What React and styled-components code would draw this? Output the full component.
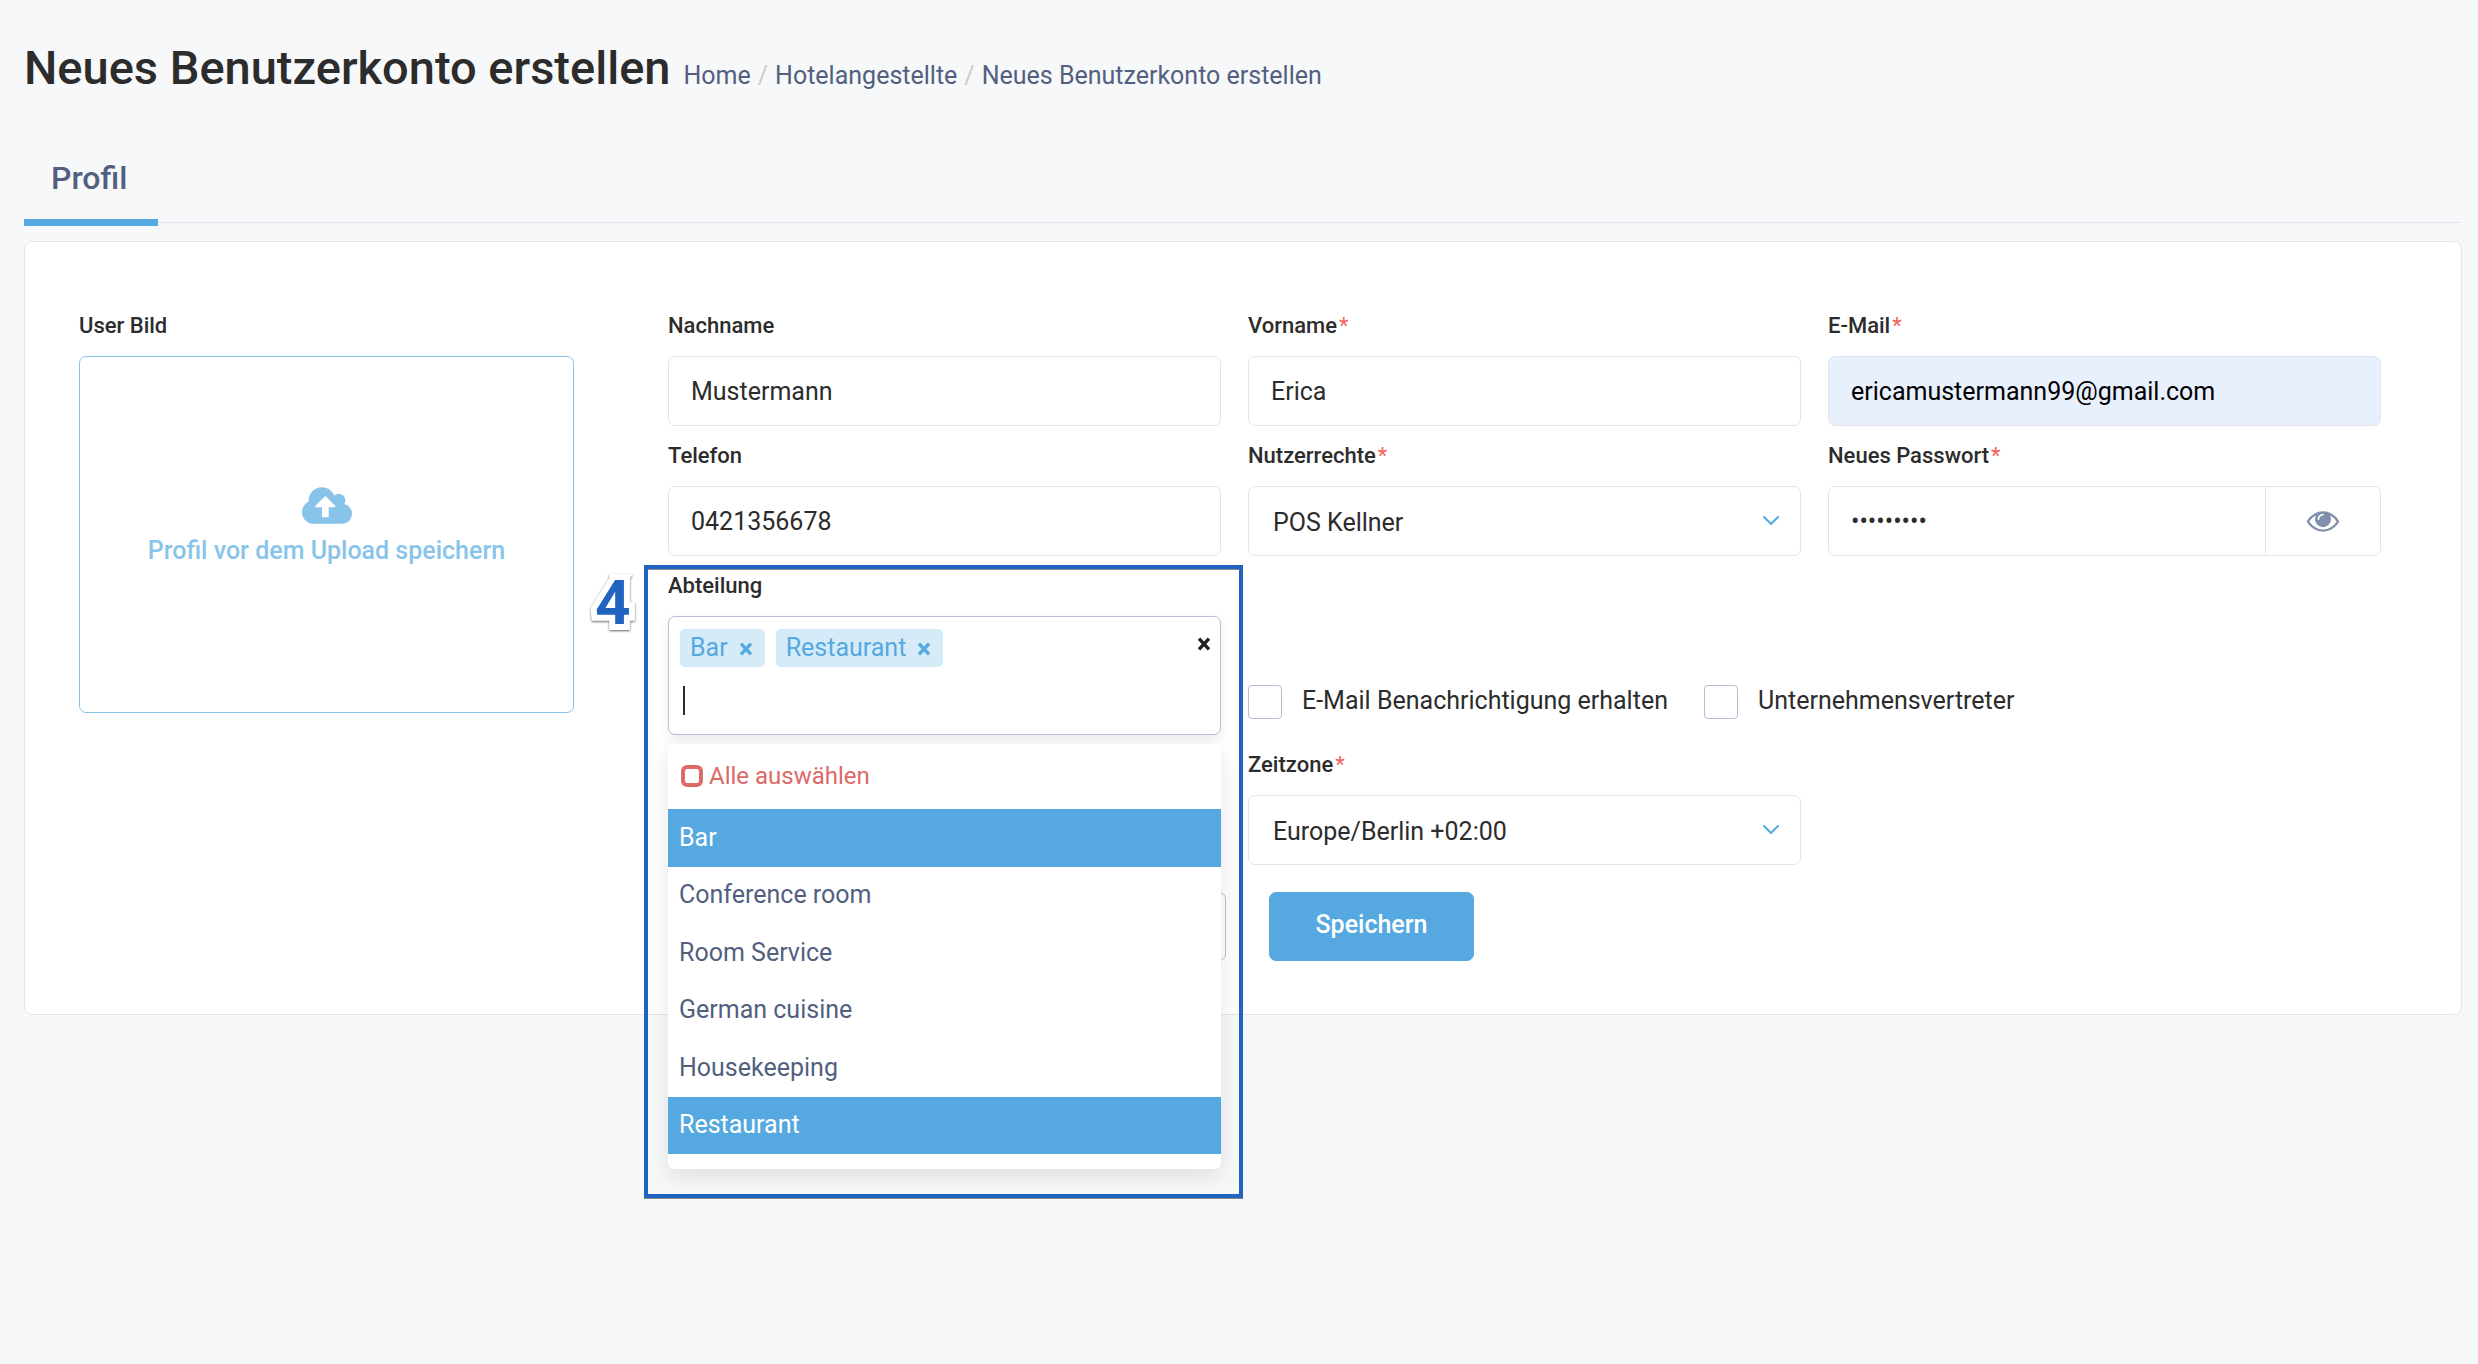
import React from "react";
import styled, { createGlobalStyle } from "styled-components";

const GlobalStyle = createGlobalStyle`
  *, *::before, *::after { box-sizing: border-box; }
  body {
    margin: 0;
    min-height: 100vh;
    background: #f7f8fa;
    color: #2c2c2c;
    font-family: Roboto, "Liberation Sans", sans-serif;
    font-size: 25px;
    line-height: 36px;
  }
  button, input, select { font: inherit; color: inherit; }
`;

const Page = styled.main`
  padding: 40px 16px 40px 24px;
`;

const PageHeader = styled.header`
  display: flex;
  align-items: baseline;
  gap: 13px;
`;

const Title = styled.h1`
  margin: 0;
  font-size: 47px;
  line-height: 56px;
  font-weight: 500;
`;

const Breadcrumb = styled.nav`
  display: flex;
  gap: 7px;
  color: #cccccc;
`;

const Crumb = styled.a`
  color: #525f7f;
  text-decoration: none;
`;

const Tabs = styled.div`
  display: flex;
  margin-top: 46px;
  margin-bottom: 18px;
  border-bottom: 1px solid #e2e5ee;
`;

const Tab = styled.button`
  height: 84px;
  margin-bottom: -4px;
  padding: 0 31px 6px 27px;
  border: 0;
  border-bottom: 7px solid #55a9e0;
  background: none;
  color: #525f7f;
  font-size: 32px;
  font-weight: 500;
`;

const Card = styled.form`
  padding: 66px 80px 53px 54px;
  border: 1px solid #e2e5ee;
  border-radius: 8px;
  background: #ffffff;
`;

const Columns = styled.div`
  display: grid;
  grid-template-columns: 495px minmax(0, 1fr);
  column-gap: 94px;
`;

const Fields = styled.div`
  display: grid;
  grid-template-columns: repeat(3, minmax(0, 1fr));
  column-gap: 27px;
  row-gap: 12px;
  align-items: start;
`;

const Field = styled.div`
  position: relative;
  display: flex;
  flex-direction: column;
  min-width: 0;
`;

const Label = styled.label`
  height: 48px;
  padding-top: 4px;
  font-size: 22px;
  line-height: 28px;
  font-weight: 500;
`;

const Required = styled.span`
  margin-left: 2px;
  color: #f0625d;
  font-weight: 400;
`;

const Input = styled.input`
  width: 100%;
  min-width: 0;
  height: 70px;
  padding: 0 22px;
  border: 1px solid #e2e5ee;
  border-radius: 7px;
  background: ${(p) => (p.$autofilled ? "#e8effd" : "#ffffff")};
  color: ${(p) => (p.$autofilled ? "#000000" : "#2c2c2c")};
  outline: 0;
`;

const SelectWrap = styled.div`
  display: grid;
  align-items: center;
`;

const Select = styled.select`
  grid-area: 1 / 1;
  width: 100%;
  height: 70px;
  padding: 4px 60px 0 24px;
  border: 1px solid #e2e5ee;
  border-radius: 7px;
  background: #ffffff;
  appearance: none;
`;

const Chevron = styled.svg`
  grid-area: 1 / 1;
  justify-self: end;
  width: 18px;
  height: 12px;
  margin-right: 21px;
  pointer-events: none;
`;

const PasswordGroup = styled.div`
  display: flex;
  height: 70px;
  border: 1px solid #e2e5ee;
  border-radius: 7px;
  overflow: hidden;
`;

const PasswordInput = styled.input`
  flex: 1;
  min-width: 0;
  padding: 2px 22px 0;
  border: 0;
  outline: 0;
`;

const RevealButton = styled.button`
  display: flex;
  align-items: center;
  justify-content: center;
  width: 115px;
  padding: 0;
  border: 0;
  border-left: 1px solid #e2e5ee;
  background: #ffffff;
`;

const UploadButton = styled.button`
  display: flex;
  flex-direction: column;
  align-items: center;
  justify-content: center;
  gap: 9px;
  height: 357px;
  padding: 0 0 14px;
  border: 1px solid #88c4ea;
  border-radius: 7px;
  background: #ffffff;
  color: #88c4ea;
  font-weight: 500;
`;

const MultiSelect = styled.div`
  position: relative;
  height: 119px;
  padding: 12px 11px;
  border: 1px solid #b8bfd6;
  border-radius: 7px;
  background: #ffffff;
  box-shadow: 0 4px 12px rgba(0, 0, 0, 0.08);
`;

const TagList = styled.div`
  display: flex;
  gap: 11px;
`;

const Tag = styled.span`
  display: flex;
  align-items: center;
  gap: 11px;
  height: 38px;
  padding: 0 12px 0 10px;
  border-radius: 5px;
  background: #d5ebf8;
  color: #55a9e0;
`;

const IconButton = styled.button`
  display: flex;
  padding: 2px 0 0;
  border: 0;
  background: none;
`;

const ClearButton = styled(IconButton)`
  position: absolute;
  top: 18px;
  right: 9px;
`;

const SearchInput = styled.input`
  display: block;
  width: 100%;
  height: 29px;
  margin-top: 19px;
  padding: 0 3px;
  border: 0;
  background: linear-gradient(#2c2c2c, #2c2c2c) 3px 0 / 2px 100% no-repeat;
  caret-color: transparent;
  outline: 0;
`;

const Dropdown = styled.div`
  position: absolute;
  z-index: 2;
  top: 176px;
  left: 0;
  right: 0;
  padding-bottom: 15px;
  border-radius: 6px;
  background: #ffffff;
  box-shadow: 0 8px 24px rgba(0, 0, 0, 0.1);
`;

const SelectAll = styled.button`
  display: flex;
  align-items: center;
  gap: 6px;
  width: 100%;
  height: 65px;
  padding: 0 13px 2px;
  border: 0;
  background: none;
  color: #dc6a67;
  font-size: 24px;
`;

const SquareIcon = styled.span`
  width: 22px;
  height: 22px;
  border: 4px solid #dc6a67;
  border-radius: 6px;
`;

const OptionList = styled.ul`
  display: grid;
  grid-auto-rows: 1fr;
  height: 345px;
  margin: 0;
  padding: 0;
  list-style: none;
`;

const Option = styled.li`
  display: flex;
  align-items: center;
  padding: 0 11px;
  background: ${(p) => (p.$selected ? "#55a9e0" : "#ffffff")};
  color: ${(p) => (p.$selected ? "#ffffff" : "#525f7f")};
`;

const Highlight = styled.div`
  position: absolute;
  z-index: 3;
  top: -3px;
  left: -24px;
  right: -22px;
  height: 633px;
  border: 4px solid #2063c1;
  box-shadow: 0 1px 0 #8a8a8a, inset 0 1px 0 #8a8a8a;
  pointer-events: none;
`;

const StepNumber = styled.span`
  position: absolute;
  top: 7px;
  left: -73px;
  color: #2063c1;
  font-size: 62px;
  line-height: 56px;
  font-weight: 700;
  -webkit-text-stroke: 12px #ffffff;
  paint-order: stroke fill;
  stroke-linejoin: round;
  filter: drop-shadow(0 1px 1px rgba(0, 0, 0, 0.6));
`;

const SideFields = styled.div`
  grid-column: 2 / 4;
  display: grid;
  grid-template-columns: repeat(2, minmax(0, 1fr));
  column-gap: 27px;
`;

const CheckRow = styled.div`
  grid-column: 1 / 3;
  display: flex;
  gap: 36px;
  height: 179px;
  padding-top: 115px;
`;

const CheckLabel = styled.label`
  display: flex;
  align-items: center;
  gap: 20px;
  height: 36px;
`;

const Checkbox = styled.input`
  width: 34px;
  height: 34px;
  margin: 2px 0 0;
  border: 1px solid #b3bcd4;
  border-radius: 4px;
  background: #ffffff;
  appearance: none;
`;

const Actions = styled.div`
  display: flex;
  justify-content: center;
  gap: 43px;
  margin: 27px -26px 0 0;
`;

const ActionButton = styled.button`
  width: ${(p) => (p.$primary ? "205px" : "214px")};
  height: 69px;
  padding: 0 0 4px;
  border: 1px solid ${(p) => (p.$primary ? "#55a9e0" : "#b8bfd6")};
  border-radius: 7px;
  background: ${(p) => (p.$primary ? "#55a9e0" : "#ffffff")};
  color: #ffffff;
  font-weight: 500;
`;

function Caption({ htmlFor, required, children }) {
  return (
    <Label htmlFor={htmlFor}>
      {children}
      {required && <Required>*</Required>}
    </Label>
  );
}

function TextField({ id, label, required, ...input }) {
  return (
    <Field>
      <Caption htmlFor={id} required={required}>{label}</Caption>
      <Input id={id} {...input} />
    </Field>
  );
}

function SelectField({ id, label, value }) {
  return (
    <Field>
      <Caption htmlFor={id} required>{label}</Caption>
      <SelectWrap>
        <Select id={id} defaultValue={value}>
          <option>{value}</option>
        </Select>
        <Chevron viewBox="0 0 18 12" fill="none" stroke="#55a9e0" strokeWidth="2" strokeLinecap="round" strokeLinejoin="round">
          <path d="M2 2l7 7 7-7" />
        </Chevron>
      </SelectWrap>
    </Field>
  );
}

function Cross({ color }) {
  return (
    <svg width="14" height="14" viewBox="0 0 14 14" stroke={color} strokeWidth="3.4">
      <path d="M2 1.6l10 10.8M12 1.6L2 12.4" />
    </svg>
  );
}

function CloudUploadIcon() {
  return (
    <svg width="50" height="37" viewBox="0 128 1920 1408" fill="currentColor">
      <path d="M1280 864q0-14-9-23l-352-352q-9-9-23-9t-23 9l-351 351q-10 12-10 24 0 14 9 23t23 9h224v352q0 13 9.500 22.500t22.500 9.500h192q13 0 22.500-9.500t9.500-22.500v-352h224q13 0 22.500-9.500t9.500-22.500zm640 288q0 159-112.500 271.500t-271.500 112.500h-1088q-185 0-316.500-131.500t-131.500-316.500q0-130 70-240t188-165q-2-30-2-43 0-212 150-362t362-150q156 0 285.500 87t188.500 231q71-62 166-62 106 0 181 75t75 181q0 76-41 138 130 31 213.500 135.500t83.500 238.500z" />
    </svg>
  );
}

function EyeIcon() {
  return (
    <svg width="32" height="21" viewBox="0 384 1792 1152" fill="#808fab">
      <path d="M1664 960q-152-236-381-353 61 104 61 225 0 185-131.500 316.500t-316.500 131.500-316.500-131.500-131.500-316.500q0-121 61-225-229 117-381 353 133 205 333.500 326.500t434.500 121.500 434.500-121.500 333.500-326.500zm-720-384q0-20-14-34t-34-14q-125 0-214.500 89.500t-89.500 214.500q0 20 14 34t34 14 34-14 14-34q0-86 61-147t147-61q20 0 34-14t14-34zm848 384q0 34-20 69-140 230-376.500 368.500t-499.500 138.500-499.500-139-376.500-368q-20-35-20-69t20-69q140-229 376.500-368t499.500-139 499.500 139 376.500 368q20 35 20 69z" />
    </svg>
  );
}

const departments = [
  { name: "Bar", selected: true },
  { name: "Conference room" },
  { name: "Room Service" },
  { name: "German cuisine" },
  { name: "Housekeeping" },
  { name: "Restaurant", selected: true },
];

function DepartmentField() {
  return (
    <Field>
      <Caption htmlFor="department">Abteilung</Caption>
      <MultiSelect>
        <TagList>
          {departments.filter((d) => d.selected).map((d) => (
            <Tag key={d.name}>
              {d.name}
              <IconButton type="button" aria-label={`${d.name} entfernen`}>
                <Cross color="#55a9e0" />
              </IconButton>
            </Tag>
          ))}
        </TagList>
        <SearchInput id="department" />
        <ClearButton type="button" aria-label="Auswahl löschen">
          <Cross color="#222222" />
        </ClearButton>
      </MultiSelect>
      <Dropdown>
        <SelectAll type="button">
          <SquareIcon />
          Alle auswählen
        </SelectAll>
        <OptionList role="listbox" aria-label="Abteilung">
          {departments.map((d) => (
            <Option key={d.name} role="option" aria-selected={!!d.selected} $selected={d.selected}>
              {d.name}
            </Option>
          ))}
        </OptionList>
      </Dropdown>
      <Highlight />
      <StepNumber>4</StepNumber>
    </Field>
  );
}

export default function App() {
  return (
    <>
      <GlobalStyle />
      <Page>
        <PageHeader>
          <Title>Neues Benutzerkonto erstellen</Title>
          <Breadcrumb>
            <Crumb href="#home">Home</Crumb>/
            <Crumb href="#staff">Hotelangestellte</Crumb>/
            <Crumb href="#new">Neues Benutzerkonto erstellen</Crumb>
          </Breadcrumb>
        </PageHeader>
        <Tabs role="tablist">
          <Tab type="button" role="tab" aria-selected="true">Profil</Tab>
        </Tabs>
        <Card onSubmit={(e) => e.preventDefault()}>
          <Columns>
            <Field>
              <Caption htmlFor="picture">User Bild</Caption>
              <UploadButton id="picture" type="button">
                <CloudUploadIcon />
                Profil vor dem Upload speichern
              </UploadButton>
            </Field>
            <Fields>
              <TextField id="lastname" label="Nachname" defaultValue="Mustermann" />
              <TextField id="firstname" label="Vorname" required defaultValue="Erica" />
              <TextField id="email" label="E-Mail" required type="email" defaultValue="ericamustermann99@gmail.com" $autofilled />
              <TextField id="phone" label="Telefon" type="tel" defaultValue="0421356678" />
              <SelectField id="role" label="Nutzerrechte" value="POS Kellner" />
              <Field>
                <Caption htmlFor="password" required>Neues Passwort</Caption>
                <PasswordGroup>
                  <PasswordInput id="password" type="password" defaultValue="musterpwd" />
                  <RevealButton type="button" aria-label="Passwort anzeigen">
                    <EyeIcon />
                  </RevealButton>
                </PasswordGroup>
              </Field>
              <DepartmentField />
              <SideFields>
                <CheckRow>
                  <CheckLabel>
                    <Checkbox type="checkbox" />
                    E-Mail Benachrichtigung erhalten
                  </CheckLabel>
                  <CheckLabel>
                    <Checkbox type="checkbox" />
                    Unternehmensvertreter
                  </CheckLabel>
                </CheckRow>
                <SelectField id="timezone" label="Zeitzone" value="Europe/Berlin +02:00" />
              </SideFields>
            </Fields>
          </Columns>
          <Actions>
            <ActionButton type="button" aria-label="Abbrechen" />
            <ActionButton type="submit" $primary>Speichern</ActionButton>
          </Actions>
        </Card>
      </Page>
    </>
  );
}
